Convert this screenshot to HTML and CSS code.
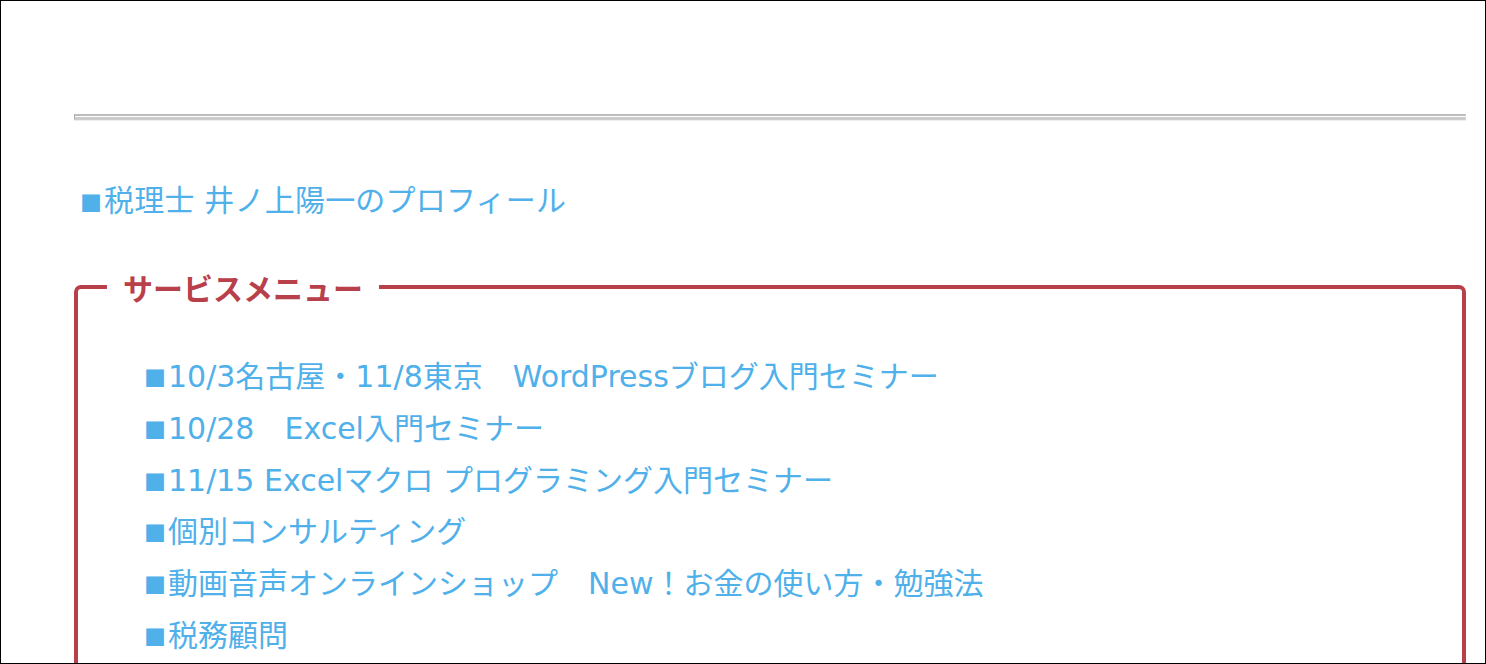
FILE: index.html
```html
<!DOCTYPE html>
<html lang="ja">
<head>
    <meta charset="UTF-8">
    <meta name="viewport" content="width=device-width, initial-scale=1.0">
    <title>税理士 井ノ上陽一</title>
    <link rel="stylesheet" href="styles.css">
</head>
<body>
    <div class="frame">
        <div class="content">
            <hr class="rule">
            <p class="profile"><a href="#"><span class="mark">■</span>税理士 井ノ上陽一のプロフィール</a></p>
            <fieldset class="menu">
                <legend>サービスメニュー</legend>
                <ul>
                    <li><a href="#"><span class="mark">■</span>10/3名古屋・11/8東京　WordPressブログ入門セミナー</a></li>
                    <li><a href="#"><span class="mark">■</span>10/28　Excel入門セミナー</a></li>
                    <li><a href="#"><span class="mark">■</span>11/15 Excelマクロ プログラミング入門セミナー</a></li>
                    <li><a href="#"><span class="mark">■</span>個別コンサルティング</a></li>
                    <li><a href="#"><span class="mark">■</span>動画音声オンラインショップ　New！お金の使い方・勉強法</a></li>
                    <li><a href="#"><span class="mark">■</span>税務顧問</a></li>
                </ul>
            </fieldset>
        </div>
    </div>
</body>
</html>
```

FILE: styles.css
```css
body {
    margin: 0;
    font-family: "DejaVu Sans", "Noto Sans CJK JP", sans-serif;
    background-color: #ffffff;
}
.frame {
    box-sizing: border-box;
    height: 664px;
    border: 1px solid #000000;
    overflow: hidden;
}
.content {
    margin: 0 19px 0 73px;
    padding-top: 113px;
}
.rule {
    margin: 0;
    height: 1px;
    border-top: 2px solid #bcbcbc;
    border-bottom: 3px solid #cbcbcb;
    border-left: 1px solid #a8a8a8;
    border-right: 1px solid #e2e2e2;
    box-shadow: 0 1px 0 #eeeeee;
}
a {
    color: #4fb0ea;
    text-decoration: none;
}
.mark {
    display: inline-block;
    width: 24px;
    overflow: hidden;
    vertical-align: top;
    font-family: "Noto Sans CJK JP", sans-serif;
    font-size: 22px;
}
.profile {
    margin: 55px 0 0 6px;
    font-size: 30px;
    line-height: 52px;
    letter-spacing: 0.2px;
}
.menu {
    margin: 43px 0 0 0;
    padding: 47px 0 60px 66px;
    border: 4px solid #b8404a;
    border-radius: 7px;
}
.menu legend {
    margin-left: -37px;
    padding: 0 16px;
    font-family: "Noto Sans CJK JP", sans-serif;
    font-size: 30px;
    font-weight: bold;
    color: #b8404a;
    line-height: 34px;
}
.menu ul {
    list-style: none;
    margin: 0;
    padding: 0;
}
.menu li {
    font-size: 30px;
    line-height: 51.8px;
}
```
